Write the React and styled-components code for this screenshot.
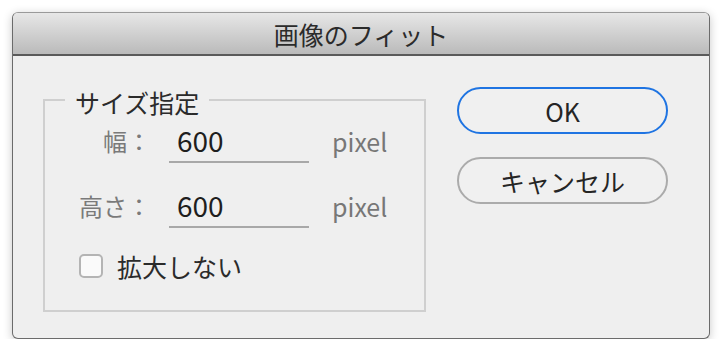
import React, { useState } from 'react'
import styled, { createGlobalStyle } from 'styled-components'

const GlobalStyle = createGlobalStyle`
  body {
    margin: 0;
    background: #ffffff;
    font-family: "Noto Sans CJK JP", "Noto Sans", sans-serif;
  }
`

const Window = styled.div`
  margin: 12px 0 0 12px;
  width: 698px;
  height: 327px;
  box-sizing: border-box;
  border: 1px solid #6b6b6b;
  border-top-color: #9a9a9a;
  border-radius: 6px;
  background: #efefef;
  box-shadow: 0 2px 10px rgba(0, 0, 0, 0.22);
  overflow: hidden;
  display: flex;
  flex-direction: column;
`

const TitleBar = styled.div`
  height: 41px;
  border-bottom: 2px solid #5a5a5a;
  background: linear-gradient(#e7e7e7, #bababa);
  display: flex;
  align-items: center;
  justify-content: center;
  font-size: 25px;
  color: #2b2b2b;
`

const Content = styled.div`
  flex: 1;
  display: flex;
  align-items: flex-start;
  padding: 27px 40px 0 30px;
`

const SizeBox = styled.fieldset`
  margin: 0;
  width: 383px;
  height: 229px;
  box-sizing: border-box;
  border: 2px solid #cfcfcf;
  padding: 1px 0 0 0;
`

const Legend = styled.legend`
  margin-left: 20px;
  padding: 4px 10px 0;
  font-size: 25px;
  line-height: 30px;
  color: #2b2b2b;
`

const Rows = styled.div`
  display: grid;
  grid-template-columns: 106px 140px auto;
  column-gap: 18px;
  row-gap: 20px;
  align-items: center;
`

const Label = styled.label`
  text-align: right;
  font-size: 24px;
  color: #7a7a7a;
`

const NumberInput = styled.input`
  width: 140px;
  height: 45px;
  box-sizing: border-box;
  border: none;
  border-bottom: 2px solid #a8a8a8;
  background: transparent;
  padding: 0 0 0 8px;
  font-family: "Noto Sans CJK JP", "Noto Sans", sans-serif;
  font-size: 28px;
  color: #1e1e1e;
  outline: none;
`

const Unit = styled.span`
  margin-left: 5px;
  font-size: 25px;
  color: #777777;
`

const CheckRow = styled.label`
  display: flex;
  align-items: center;
  gap: 14px;
  margin: 20px 0 0 34px;
  font-size: 25px;
  color: #2b2b2b;
`

const Box = styled.span`
  width: 24px;
  height: 24px;
  box-sizing: border-box;
  border: 2px solid #b4b4b4;
  border-radius: 5px;
  background: #fafafa;
`

const Buttons = styled.div`
  margin: 4px 0 0 31px;
  display: flex;
  flex-direction: column;
  gap: 23px;
`

const Button = styled.button`
  width: 211px;
  height: 47px;
  border-radius: 24px;
  border: 2px solid ${p => (p.$primary ? '#1f74e2' : '#ababab')};
  background: #f0f0f0;
  font-family: "Noto Sans CJK JP", "Noto Sans", sans-serif;
  font-size: 25px;
  color: #252525;
  padding: 0;
`

export default function App() {
  const [width, setWidth] = useState('600')
  const [height, setHeight] = useState('600')

  return (
    <>
      <GlobalStyle />
      <Window>
        <TitleBar>画像のフィット</TitleBar>
        <Content>
          <SizeBox>
            <Legend>サイズ指定</Legend>
            <Rows>
              <Label htmlFor="fit-width">幅：</Label>
              <NumberInput
                id="fit-width"
                value={width}
                onChange={e => setWidth(e.target.value)}
              />
              <Unit>pixel</Unit>
              <Label htmlFor="fit-height">高さ：</Label>
              <NumberInput
                id="fit-height"
                value={height}
                onChange={e => setHeight(e.target.value)}
              />
              <Unit>pixel</Unit>
            </Rows>
            <CheckRow>
              <Box />
              拡大しない
            </CheckRow>
          </SizeBox>
          <Buttons>
            <Button $primary>OK</Button>
            <Button>キャンセル</Button>
          </Buttons>
        </Content>
      </Window>
    </>
  )
}
